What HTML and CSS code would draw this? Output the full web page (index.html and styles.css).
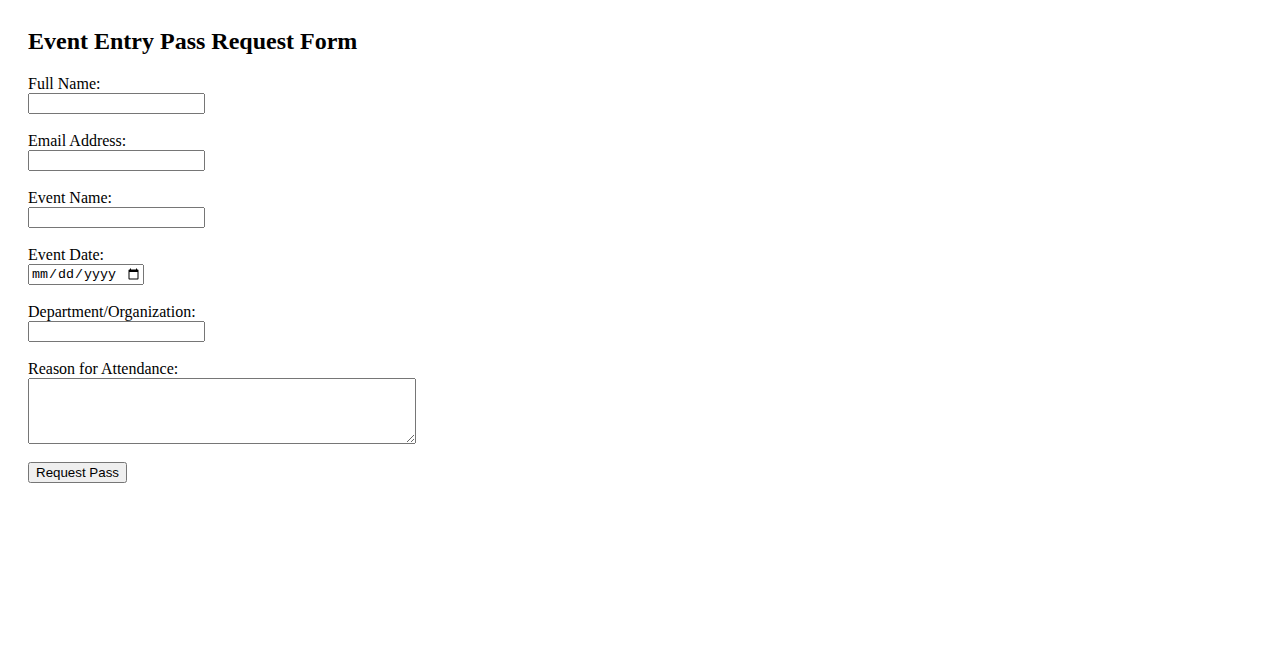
FILE: index.html
```html
<!DOCTYPE html>
<html lang="en">
<head>
<meta charset="utf-8">
<title>Event Entry Pass Request Form</title>
<link rel="stylesheet" href="styles.css">
</head>
<body>
<h2 class="title">Event Entry Pass Request Form</h2>
<form class="pass-form">
<label class="field-label" for="fullname">Full Name:</label><br>
<input class="text-input" type="text" id="fullname" name="fullname"><br><br>
<label class="field-label" for="email">Email Address:</label><br>
<input class="text-input" type="email" id="email" name="email"><br><br>
<label class="field-label" for="eventname">Event Name:</label><br>
<input class="text-input" type="text" id="eventname" name="eventname"><br><br>
<label class="field-label" for="eventdate">Event Date:</label><br>
<input class="date-input" type="date" id="eventdate" name="eventdate"><br><br>
<label class="field-label" for="dept">Department/Organization:</label><br>
<input class="text-input" type="text" id="dept" name="dept"><br><br>
<label class="field-label" for="reason">Reason for Attendance:</label><br>
<textarea class="reason-input" id="reason" name="reason" rows="4" cols="50"></textarea><br><br>
<button class="submit-btn" type="submit">Request Pass</button>
</form>
</body>
</html>
```

FILE: styles.css
```css
body {
  margin: 0;
  padding: 28px;
  font-family: "Liberation Serif", "Times New Roman", serif;
  font-size: 16px;
  color: #000;
  background: #fff;
}
.title {
  margin: 0 0 19.92px 0;
  font-size: 24px;
  font-weight: bold;
}
.pass-form {
  margin: 0;
}
.text-input {
  width: 177px;
  height: 21px;
  box-sizing: border-box;
  font-family: "Liberation Sans", Arial, sans-serif;
  font-size: 13.33px;
}
.date-input {
  width: 116px;
  height: 21px;
  box-sizing: border-box;
  font-family: "Liberation Mono", "Courier New", monospace;
  font-size: 13.33px;
}
.reason-input {
  width: 388px;
  height: 66px;
  box-sizing: border-box;
  vertical-align: bottom;
  font-family: "Liberation Mono", "Courier New", monospace;
  font-size: 13.33px;
}
.submit-btn {
  width: 99px;
  height: 21px;
  box-sizing: border-box;
  font-family: "Liberation Sans", Arial, sans-serif;
  font-size: 13.33px;
  padding: 1px 6px;
}
```
